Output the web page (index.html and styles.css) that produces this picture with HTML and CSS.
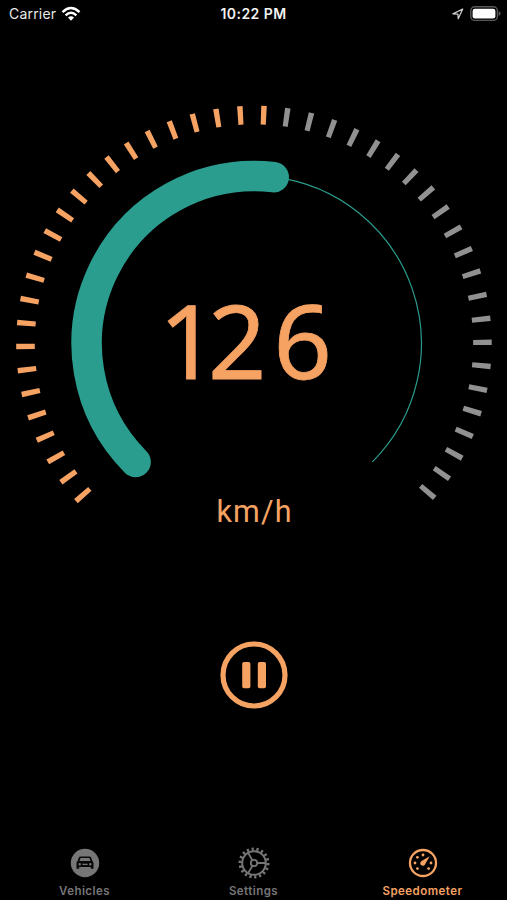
FILE: index.html
```html
<!DOCTYPE html>
<html lang="en">
<head>
<meta charset="utf-8">
<title>Speedometer</title>
<link rel="stylesheet" href="styles.css">
</head>
<body>
<div class="app">
  <header class="status">
    <div class="carrier"><span>Carrier</span>
      <svg width="20" height="16" viewBox="0 0 20 16" fill="none" stroke="#fff" stroke-width="2.4"><path d="M1.5 6.1Q10-1.9 18.5 6.1M4.6 9.3Q10 4.2 15.4 9.3"/><path d="M7 11.5Q10 9 13 11.5L10 14.7Z" fill="#fff" stroke="none"/></svg>
    </div>
    <div class="time">10:22 PM</div>
    <div class="indicators">
      <svg width="12" height="12" viewBox="0 0 12 12" fill="none" stroke="#d0d0d0" stroke-width="1.2" stroke-linejoin="round"><path d="M.9 5.9 10.7 1 6.2 10.7 5.9 6.1Z"/></svg>
      <svg width="31" height="16" viewBox="0 0 31 16"><rect x=".8" y=".8" width="26.6" height="13.6" rx="4" fill="none" stroke="#59595b" stroke-width="1.4"/><rect x="2.6" y="2.7" width="22.8" height="9.8" rx="2.3" fill="#fff"/><path d="M28.6 5.2Q30.6 6 30.6 7.6T28.6 10Z" fill="#59595b"/></svg>
    </div>
  </header>
  <main class="main">
    <svg class="gauge" width="507" height="460" viewBox="0 90 507 460">
      <g class="ticks">
        <path class="on" d="M84.6 496.9A228.5 228.5 0 0 1 273.9 115.9"/>
        <path class="off" d="M283.9 117A228.5 228.5 0 0 1 421.1 499.3"/>
      </g>
      <path class="track" d="M273.7 177.2A167.5 167.5 0 0 1 372.4 461.9"/>
      <path class="progress" d="M135.6 461.9A167.5 167.5 0 0 1 273.7 177.2"/>
      <text class="speed" x="159 208 273.5" y="378.5">126</text>
      <text class="unit" x="216.5" y="522" textLength="75">km/h</text>
    </svg>
    <button class="pause" aria-label="Pause">
      <svg width="68" height="68" viewBox="0 0 68 68"><circle cx="34" cy="34" r="31" fill="none" stroke="#f5a263" stroke-width="5.2"/><rect x="22.2" y="21" width="8.2" height="26.2" rx="1.8" fill="#f5a263"/><rect x="37.8" y="21" width="8.2" height="26.2" rx="1.8" fill="#f5a263"/></svg>
    </button>
  </main>
  <nav class="tabs">
    <a class="tab">
      <svg width="32" height="32" viewBox="0 0 32 32"><circle cx="16" cy="16" r="14.2" fill="#767676"/><path fill="#080808" fill-rule="evenodd" d="M11.5 9.5H20.5Q21.8 9.5 22.2 10.7L23.4 14Q24.5 14.8 24.5 16.2V21.7H21.8V20H10.2V21.7H7.5V16.2Q7.5 14.8 8.6 14L9.8 10.7Q10.2 9.5 11.5 9.5ZM12 11Q11.5 11 11.3 11.6L10.5 13.9H21.5L20.7 11.6Q20.5 11 20 11ZM10.7 16A1.2 1.2 0 1 0 10.7 18.4 1.2 1.2 0 1 0 10.7 16ZM21.3 16A1.2 1.2 0 1 0 21.3 18.4 1.2 1.2 0 1 0 21.3 16ZM13.4 16.7V18H18.6V16.7Z"/></svg>
      <span>Vehicles</span>
    </a>
    <a class="tab">
      <svg width="32" height="32" viewBox="0 0 32 32" fill="none" stroke="#767676"><circle cx="16" cy="16" r="14" pathLength="90" stroke-width="3" stroke-dasharray="2.3 2.7"/><circle cx="16" cy="16" r="11.8" stroke-width="2"/><circle cx="16" cy="16" r="3.2" stroke-width="1.8"/><path d="M19.2 16H28M14.4 13.2 10 5.6M14.4 18.8 10 26.4" stroke-width="1.8"/></svg>
      <span>Settings</span>
    </a>
    <a class="tab active">
      <svg width="32" height="32" viewBox="0 0 32 32"><circle cx="16" cy="16" r="13" fill="none" stroke="#f5a263" stroke-width="2.3"/><path d="M22.7 9.2 18 17.4A2.5 2.5 0 1 1 14.6 14.1Z" fill="#f5a263"/><g fill="#f5a263"><circle cx="16" cy="8" r="1.4"/><circle cx="10.4" cy="10.3" r="1.4"/><circle cx="8" cy="16" r="1.4"/><circle cx="10.4" cy="21.6" r="1.4"/><circle cx="21.6" cy="21.6" r="1.4"/><circle cx="24" cy="16" r="1.4"/></g></svg>
      <span>Speedometer</span>
    </a>
  </nav>
</div>
</body>
</html>
```
FILE: styles.css
```css
body { margin: 0; background: #000; font-family: Inter, "Liberation Sans", sans-serif; }
.app { width: 507px; height: 900px; display: flex; flex-direction: column; background: #000; overflow: hidden; }
.status { height: 27px; padding: 0 6px 0 9px; display: grid; grid-template-columns: 1fr auto 1fr; align-items: center; color: #e8e8e8; font-size: 14px; }
.carrier { display: flex; align-items: center; gap: 5px; letter-spacing: 0.2px; }
.time { font-weight: 600; font-size: 14px; letter-spacing: 0.45px; color: #f2f2f2; margin-right: 3px; }
.indicators { display: flex; justify-content: flex-end; align-items: center; gap: 6px; }
.main { flex: 1; padding-top: 63px; display: flex; flex-direction: column; align-items: center; }
.gauge { display: block; }
.ticks path { fill: none; stroke-width: 18.6; stroke-dasharray: 5.3 17.91; }
.ticks .on { stroke: #f5a263; }
.ticks .off { stroke: #919191; }
.track { fill: none; stroke: #2a9c8c; stroke-width: 1.2; }
.progress { fill: none; stroke: #2a9d8f; stroke-width: 30.5; stroke-linecap: round; }
.speed { font: 400 102px "Noto Sans", sans-serif; fill: #f5a263; stroke: #f5a263; stroke-width: 0.8; }
.unit { font: 400 30.5px Roboto, sans-serif; fill: #f5a263; }
.pause { margin-top: 91px; padding: 0; border: 0; background: none; }
.pause svg { display: block; }
.tabs { height: 53px; display: grid; grid-template-columns: repeat(3, 1fr); }
.tab { display: flex; flex-direction: column; align-items: center; color: #767676; font-size: 11.5px; font-weight: 600; letter-spacing: 0.45px; line-height: 14px; }
.tab svg { display: block; margin-bottom: 5px; }
.active { color: #f5a263; }
```
